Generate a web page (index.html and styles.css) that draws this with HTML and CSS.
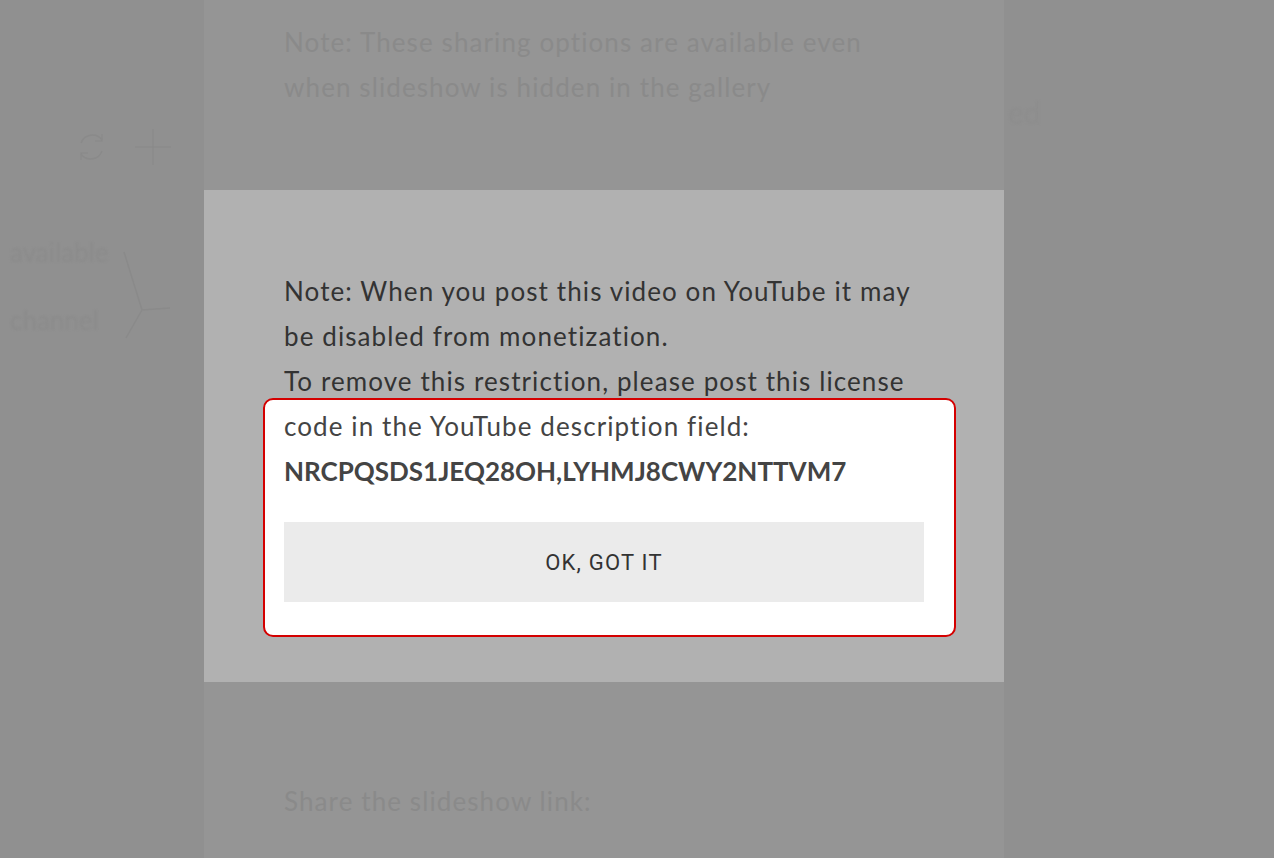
FILE: index.html
```html
<!doctype html>
<html lang="en">
<head>
    <meta charset="UTF-8">
    <meta name="viewport" content="width=device-width, initial-scale=1.0">
    <title>Share slideshow</title>
    <link rel="stylesheet" href="styles.css">
</head>
<body>

<div class="layout">
    <div class="side">
        <div class="tools">
            <svg class="tool" width="32" height="34" viewBox="0 0 32 34">
                <path d="M26 10 A12 12 0 0 0 5 13" />
                <path d="M26 4 V11 H19" />
                <path d="M5 24 A12 12 0 0 0 26 21" />
                <path d="M5 30 V23 H12" />
            </svg>
            <svg class="tool" width="38" height="38" viewBox="0 0 38 38">
                <path d="M19 1 V37 M1 19 H37" />
            </svg>
        </div>
        <p class="ghost g1">available</p>
        <svg class="pointer" width="50" height="90" viewBox="0 0 50 90">
            <path d="M2 2 L20 60 L48 58 M20 60 L4 88" />
        </svg>
        <p class="ghost g2">channel</p>
    </div>

    <div class="column">
        <p class="note">Note: These sharing options are available even<br>when slideshow is hidden in the gallery</p>

        <div class="dialog">
            <p class="msg">Note: When you post this video on YouTube it may<br>be disabled from monetization.<br>To remove this restriction, please post this license</p>
            <div class="spot">
                <p class="msg">code in the YouTube description field:</p>
                <p class="code">NRCPQSDS1JEQ28OH,LYHMJ8CWY2NTTVM7</p>
                <button class="btn">OK, GOT IT</button>
            </div>
        </div>

        <p class="note share">Share the slideshow link:</p>
    </div>

    <div class="side right">
        <p class="ghost g3">ed</p>
    </div>
</div>

</body>
</html>
```

FILE: styles.css
```css
body{
    margin: 0;
    background-color: #909090;
    font-family: Lato, "Open Sans", sans-serif;
    overflow: hidden;
}
p{
    margin: 0;
}
.layout{
    display: flex;
    height: 858px;
}
.side{
    width: 204px;
    flex-shrink: 0;
    overflow: hidden;
}
.side.right{
    flex: 1;
}
.tools{
    display: flex;
    align-items: center;
    gap: 26px;
    padding: 128px 0 0 76px;
}
.tool path,
.pointer path{
    fill: none;
    stroke: #8a8a8a;
    stroke-width: 1.5;
}
.ghost{
    color: #8b8b8b;
    font-size: 26px;
    white-space: nowrap;
    filter: blur(1px);
}
.g1{
    margin: 70px 0 0 10px;
}
.pointer{
    display: block;
    margin: -18px 0 0 122px;
}
.g2{
    margin: -36px 0 0 10px;
}
.g3{
    margin: 94px 0 0 4px;
    font-size: 30px;
    color: #8d8d8d;
}

.column{
    width: 800px;
    flex-shrink: 0;
    background-color: #959595;
}
.note{
    padding: 20px 80px 0;
    font-size: 26px;
    line-height: 45px;
    letter-spacing: 1.1px;
    color: #8a8a8a;
}
.note.share{
    padding-top: 97px;
}

.dialog{
    margin-top: 80px;
    padding: 79px 80px 45px;
    background-color: #b1b1b1;
}
.msg{
    font-size: 26px;
    line-height: 45px;
    letter-spacing: 1.1px;
    color: #333;
}
.spot{
    margin: -6px -32px 0 -21px;
    padding: 4px 30px 33px 19px;
    border: 2px solid #d40000;
    border-radius: 10px;
    background-color: #fff;
}
.spot .msg{
    color: #444;
}
.code{
    font-size: 26px;
    font-weight: bold;
    line-height: 45px;
    letter-spacing: 0;
    color: #444;
}
.btn{
    display: block;
    width: 100%;
    height: 80px;
    margin-top: 28px;
    border: none;
    background-color: #ebebeb;
    font-family: Roboto, sans-serif;
    font-size: 22px;
    letter-spacing: 1.2px;
    color: #333;
    cursor: pointer;
}
```
